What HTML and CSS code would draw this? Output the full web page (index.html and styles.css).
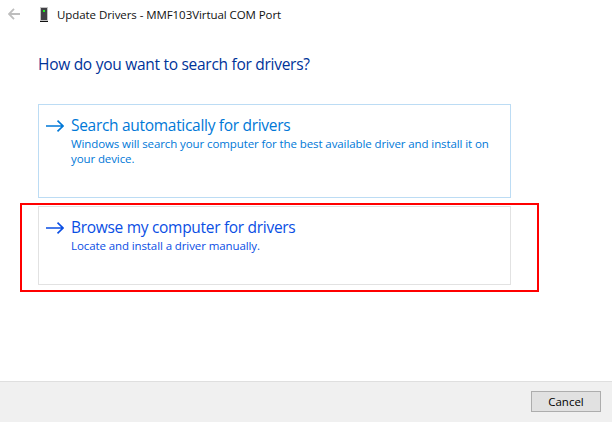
FILE: index.html
```html
<!DOCTYPE html>
<html lang="en">
<head>
<meta charset="utf-8">
<title>Update Drivers</title>
<link rel="stylesheet" href="styles.css">
</head>
<body>
<div class="window">
  <header class="titlebar">
    <svg class="back" width="12" height="12" viewBox="0 0 12 12"><path d="M12 6H1.200M6 .9L1 6l5 5.100"/></svg>
    <svg class="device" width="10" height="16" viewBox="0 0 10 16"><path fill="#c4c4c4" d="M1 0h8v14H1z"/><path fill="#414145" d="M2 1h6v12H2z"/><path fill="#111" d="M1 14h8v1H1z"/><path fill="#20f020" d="M4 3h2v2H4z"/></svg>
    <span class="caption">Update Drivers - MMF103Virtual COM Port</span>
  </header>
  <main class="content">
    <h1 class="heading">How do you want to search for drivers?</h1>
    <section class="option search">
      <svg class="arrow" width="18" height="12" viewBox="0 0 18 12"><path d="M0 6h17M11.500 .6L17 6l-5.500 5.400"/></svg>
      <div>
        <h2 class="name">Search automatically for drivers</h2>
        <p class="detail">Windows will search your computer for the best available driver and install it on<br>your device.</p>
      </div>
    </section>
    <section class="option browse">
      <svg class="arrow" width="18" height="12" viewBox="0 0 18 12"><path d="M0 6h17M11.500 .6L17 6l-5.500 5.400"/></svg>
      <div>
        <h2 class="name">Browse my computer for drivers</h2>
        <p class="detail">Locate and install a driver manually.</p>
      </div>
      <div class="highlight"></div>
    </section>
  </main>
  <footer class="footer"><button class="cancel">Cancel</button></footer>
</div>
</body>
</html>
```
FILE: styles.css
```css
* { box-sizing: border-box; }
body { margin: 0; background: #fff; font-family: "Open Sans", "Noto Sans", sans-serif; }
svg { display: block; flex: none; fill: none; }
h1, h2, p { margin: 0; font-weight: 400; white-space: nowrap; }
.window { width: 612px; height: 422px; display: flex; flex-direction: column; overflow: hidden; }
.titlebar { height: 30px; display: flex; align-items: center; padding-left: 8px; }
.back { margin-right: 19px; margin-bottom: 2px; stroke: #bebebe; stroke-width: 1.8; }
.device { margin-right: 8px; shape-rendering: crispEdges; }
.caption { font-size: 11.5px; letter-spacing: -0.07px; color: #111; white-space: nowrap; margin-top: -2px; }
.content { flex: 1; padding: 22px 0 0 38px; }
.heading { height: 52px; line-height: 24px; font-size: 15.500px; letter-spacing: -0.28px; color: #003399; }
.option { position: relative; width: 473px; border: 1px solid; display: flex; gap: 7px; padding: 9px 0 0 7px; }
.arrow { margin-top: 6px; stroke: currentColor; stroke-width: 1.6; }
.name { font-size: 15.500px; line-height: 22px; letter-spacing: -0.3px; }
.detail { font-size: 11.500px; line-height: 15px; letter-spacing: -0.1px; }
.search { height: 94px; border-color: #bcdcf4; color: #0078d7; margin-bottom: 8px; }
.browse { height: 79px; border-color: #e2e2e2; color: #0a4ee4; }
.highlight { position: absolute; left: -19px; top: -4px; width: 519px; height: 89px; border: 2px solid #f00; }
.footer { height: 41px; background: #f0f0f0; border-top: 1px solid #dfdfdf; display: flex; justify-content: flex-end; padding: 9px 11px 0 0; }
.cancel { width: 70px; height: 21px; padding: 0; border: 1px solid #adadad; background: #e1e1e1; color: #000; font: 11.500px/19px "Open Sans", sans-serif; letter-spacing: 0; }
```
